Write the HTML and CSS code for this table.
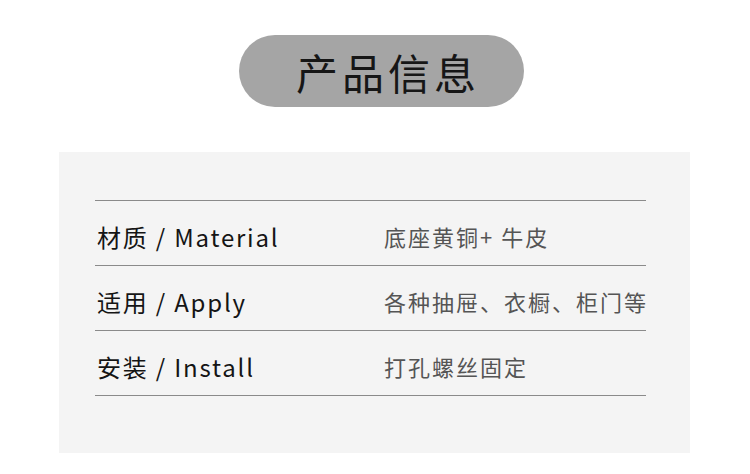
FILE: index.html
```html
<!doctype html>
<html lang="zh-CN">
<head>
    <meta charset="UTF-8">
    <title>产品信息</title>
    <link rel="stylesheet" href="styles.css">
</head>
<body>
    <div class="header">
        <div class="pill">产品信息</div>
    </div>
    <div class="panel">
        <div class="info-list">
            <div class="row">
                <span class="label">材质 / Material</span>
                <span class="value">底座黄铜+ 牛皮</span>
            </div>
            <div class="row">
                <span class="label">适用 / Apply</span>
                <span class="value">各种抽屉、衣橱、柜门等</span>
            </div>
            <div class="row">
                <span class="label">安装 / Install</span>
                <span class="value">打孔螺丝固定</span>
            </div>
        </div>
    </div>
</body>
</html>
```

FILE: styles.css
```css
body {
    margin: 0;
    font-family: "Noto Sans CJK SC", "Noto Sans", sans-serif;
    background-color: #fff;
    width: 750px;
    height: 474px;
    overflow: hidden;
}

.header {
    display: flex;
    justify-content: center;
    padding-top: 35px;
    padding-left: 13px;
}

.pill {
    width: 285px;
    height: 72px;
    box-sizing: border-box;
    padding-left: 13px;
    border-radius: 36px;
    background-color: #a5a5a5;
    color: #161616;
    font-size: 42px;
    letter-spacing: 4px;
    display: flex;
    align-items: center;
    justify-content: center;
}

.panel {
    margin: 45px 0 0 59px;
    width: 631px;
    height: 301px;
    background-color: #f4f4f4;
    box-sizing: border-box;
    padding: 48px 44px 0 36px;
}

.info-list {
    border-top: 1px solid #8a8a8a;
}

.row {
    display: flex;
    align-items: center;
    box-sizing: border-box;
    height: 65px;
    padding-top: 6px;
    border-bottom: 1px solid #8a8a8a;
}

.label {
    flex: none;
    width: 287px;
    padding-left: 2px;
    font-size: 24px;
    color: #151515;
    letter-spacing: 1.8px;
    white-space: nowrap;
}

.value {
    font-size: 22px;
    color: #555;
    letter-spacing: 2px;
    white-space: nowrap;
}
```
